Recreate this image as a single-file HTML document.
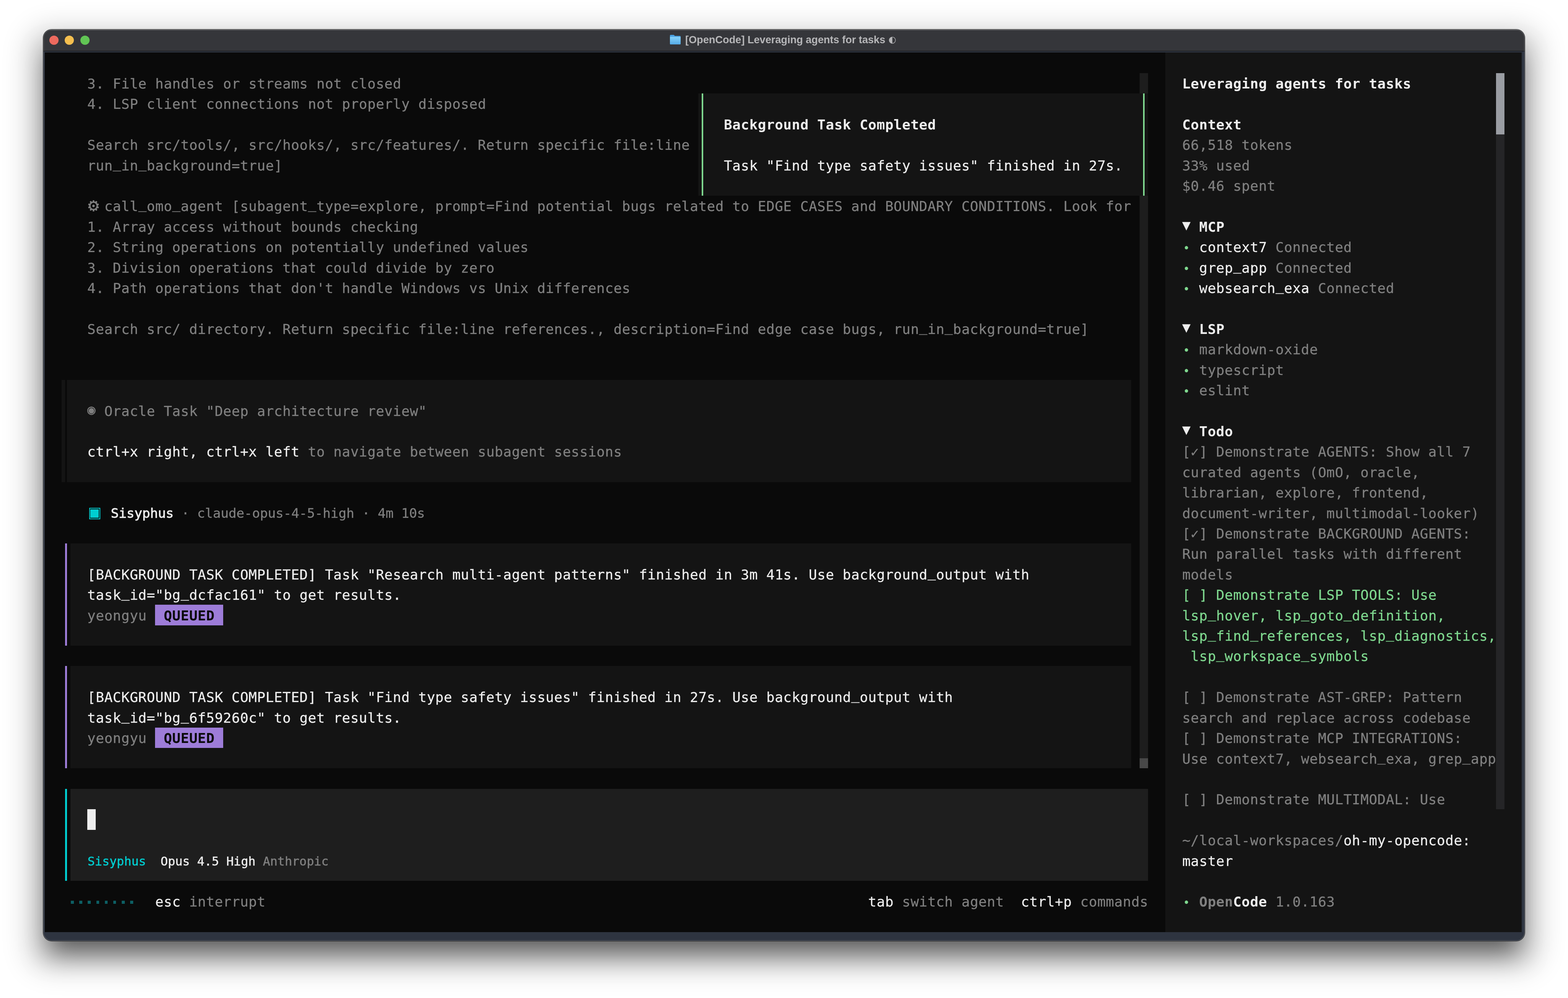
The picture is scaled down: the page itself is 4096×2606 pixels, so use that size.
<!DOCTYPE html>
<html lang="en"><head><meta charset="utf-8"><title>[OpenCode] Leveraging agents for tasks</title>
<style>
html,body{margin:0;padding:0;}
body{width:4096px;height:2606px;background:#fff;position:relative;overflow:hidden;
 font-family:"DejaVu Sans Mono","Liberation Mono",monospace;}
#win{position:absolute;border-radius:22px;background:#2e3440;
 box-shadow:0 0 0 1px rgba(0,0,0,.8),0 45px 67px -14px rgba(0,0,0,.59),0 35px 70px 40px rgba(0,0,0,.17);}
#clip{position:absolute;border-radius:22px;overflow:hidden;}
#page{position:absolute;width:4096px;height:2606px;will-change:transform;}
#ring{position:absolute;border-radius:22px;box-shadow:inset 0 0 0 1.5px rgba(255,255,255,.2);pointer-events:none;}
.r{position:absolute;}
.t{position:absolute;white-space:pre;font-size:36.0px;line-height:53.41px;height:53.41px;
 font-kerning:none;font-variant-ligatures:none;letter-spacing:0.497px;-webkit-text-stroke:0.3px;}
.u{position:relative;top:-6px;}
.up{position:relative;top:-3.3px;}
.tri{position:relative;top:-4.5px;}
.bl{display:inline-block;width:22.171px;text-align:center;letter-spacing:0;font-size:29px;position:relative;top:-1px;}
.m{color:#808080;}
.w{color:#eeeeee;}
.k{color:#0a0a0a;}
.c{color:#00ced1;}
.gr{color:#7fd88f;}
.b{font-weight:bold;-webkit-text-stroke:0;}
.gear{font-family:"DejaVu Sans",sans-serif;font-size:38px;font-weight:bold;letter-spacing:0;-webkit-text-stroke:0.8px;position:relative;top:0;left:-1px;}
.sq{width:29.2px;height:29.6px;box-sizing:border-box;border:2.6px solid #00ced1;}
.sq i{position:absolute;left:1.7px;top:1.7px;right:1.7px;bottom:1.7px;background:#00ced1;}
#hdr{font-size:34.5px;letter-spacing:-0.27px;}
#agent{font-size:31.7px;letter-spacing:0;-webkit-text-stroke:0.55px;margin-top:1.8px;}
.sb{-webkit-text-stroke:0.85px;}
#title{position:absolute;left:1749px;top:76px;height:56px;line-height:56px;white-space:pre;
 font-family:"Liberation Sans",sans-serif;font-weight:bold;font-size:27.3px;letter-spacing:-.1px;color:#b6b6b8;}
#folder{position:absolute;left:0;top:13.5px;}
#ttext{position:absolute;left:41px;top:0;}
#tmoon{position:absolute;left:572px;top:-1px;font-family:"DejaVu Sans",sans-serif;font-weight:normal;font-size:23px;letter-spacing:0;}
</style></head><body>
<div id="win" style="left:112.6px;top:76.9px;width:3870.4px;height:2380.1px;">
</div>
<div id="clip" style="left:112.6px;top:76.9px;width:3870.4px;height:2380.1px;">
<div id="page" style="left:-112.6px;top:-76.9px;">
<div class="r" style="left:112.60px;top:76.90px;width:3870.40px;height:56.00px;background:#35363a;box-shadow:inset 0 1.5px 0 rgba(255,255,255,.22);"></div>
<div class="r" style="left:129.00px;top:93.00px;width:24.00px;height:24.00px;background:#ed6a5e;border-radius:50%;"></div>
<div class="r" style="left:169.00px;top:93.00px;width:24.00px;height:24.00px;background:#f5bf4f;border-radius:50%;"></div>
<div class="r" style="left:209.50px;top:93.00px;width:24.00px;height:24.00px;background:#61c554;border-radius:50%;"></div>
<div class="r" style="left:112.60px;top:132.70px;width:3870.40px;height:1.30px;background:#0c0c0e;"></div>
<div id="title"><svg id="folder" viewBox="0 0 30 27" width="30" height="27"><defs><linearGradient id="fg" x1="0" y1="0" x2="0" y2="1"><stop offset="0" stop-color="#86d3fa"/><stop offset="1" stop-color="#55aae6"/></linearGradient></defs><path d="M1 3C1 1.900 1.900 1 3 1h7.300c.7 0 1.300.3 1.800.8l1.700 1.900H27c1.100 0 2 .9 2 2V24c0 1.100-.9 2-2 2H3c-1.100 0-2-.9-2-2z" fill="#4ba2e2"/><path d="M1 7.200c0-.5.400-.9.900-.9h26.200c.5 0 .9.400.9.900V24c0 1.100-.9 2-2 2H3c-1.100 0-2-.9-2-2z" fill="url(#fg)"/></svg><span id="ttext">[OpenCode] Leveraging agents for tasks</span><span id="tmoon">◐</span></div>
<div class="r" style="left:117.00px;top:137.10px;width:3857.75px;height:2296.63px;background:#0a0a0a;"></div>
<div class="r" style="left:3043.57px;top:137.10px;width:931.18px;height:2296.63px;background:#141414;"></div>
<div class="t" style="left:228.10px;top:192.01px;"><span class="m">3. File handles or streams not closed</span></div>
<div class="t" style="left:228.10px;top:245.42px;"><span class="m">4. LSP client connections not properly disposed</span></div>
<div class="t" style="left:228.10px;top:352.24px;"><span class="m">Search src/tools/, src/hooks/, src/features/. Return specific file:line</span></div>
<div class="t" style="left:228.10px;top:405.65px;"><span class="m">run<span class="u">_</span>in<span class="u">_</span>background=true]</span></div>
<div class="t g" style="left:228.35px;top:512.47px;"><span class="m gear">⚙</span></div>
<div class="t" style="left:272.45px;top:512.47px;"><span class="m">call<span class="u">_</span>omo<span class="u">_</span>agent [subagent<span class="u">_</span>type=explore, prompt=Find potential bugs related to EDGE CASES and BOUNDARY CONDITIONS. Look for</span></div>
<div class="t" style="left:228.10px;top:565.88px;"><span class="m">1. Array access without bounds checking</span></div>
<div class="t" style="left:228.10px;top:619.29px;"><span class="m">2. String operations on potentially undefined values</span></div>
<div class="t" style="left:228.10px;top:672.70px;"><span class="m">3. Division operations that could divide by zero</span></div>
<div class="t" style="left:228.10px;top:726.11px;"><span class="m">4. Path operations that don't handle Windows vs Unix differences</span></div>
<div class="t" style="left:228.10px;top:832.93px;"><span class="m">Search src/ directory. Return specific file:line references., description=Find edge case bugs, run<span class="u">_</span>in<span class="u">_</span>background=true]</span></div>
<div class="r" style="left:2977.06px;top:190.51px;width:22.17px;height:1815.94px;background:#1d1d1d;"></div>
<div class="r" style="left:2977.06px;top:1979.74px;width:22.17px;height:26.70px;background:#484848;"></div>
<div class="r" style="left:1824.17px;top:243.92px;width:1175.06px;height:267.05px;background:#141414;"></div>
<div class="r" style="left:1833.05px;top:243.92px;width:4.40px;height:267.05px;background:#7fd88f;"></div>
<div class="r" style="left:2985.94px;top:243.92px;width:4.40px;height:267.05px;background:#7fd88f;"></div>
<div class="t" style="left:1890.93px;top:298.83px;"><span class="w b">Background Task Completed</span></div>
<div class="t" style="left:1890.93px;top:405.65px;"><span class="w">Task "Find type safety issues" finished in 27s.</span></div>
<div class="r" style="left:161.34px;top:991.66px;width:2793.55px;height:267.05px;background:#141414;"></div>
<div class="r" style="left:170.23px;top:991.66px;width:4.40px;height:267.05px;background:#0a0a0a;"></div>
<div class="t" style="left:228.10px;top:1046.57px;"><span class="m"><span class="up">◉</span> Oracle Task "Deep architecture review"</span></div>
<div class="t" style="left:228.10px;top:1153.39px;"><span class="w">ctrl+x right, ctrl+x left</span><span class="m"> to navigate between subagent sessions</span></div>
<div class="r sq" style="left:232.7px;top:1326.1px;"><i></i></div>
<div class="t" id="hdr" style="left:289.6px;top:1313.62px;"><span class="w sb">Sisyphus</span><span class="m"> · claude-opus-4-5-high · 4m 10s</span></div>
<div class="r" style="left:183.51px;top:1418.94px;width:2771.38px;height:267.05px;background:#141414;"></div>
<div class="r" style="left:170.23px;top:1418.94px;width:4.40px;height:267.05px;background:#9d7cd8;"></div>
<div class="t" style="left:228.10px;top:1473.85px;"><span class="w">[BACKGROUND TASK COMPLETED] Task "Research multi-agent patterns" finished in 3m 41s. Use background<span class="u">_</span>output with</span></div>
<div class="t" style="left:228.10px;top:1527.26px;"><span class="w">task<span class="u">_</span>id="bg<span class="u">_</span>dcfac161" to get results.</span></div>
<div class="t" style="left:228.10px;top:1580.67px;"><span class="m">yeongyu</span></div>
<div class="r" style="left:405.22px;top:1579.17px;width:177.37px;height:53.41px;background:#9d7cd8;"></div>
<div class="t" style="left:405.47px;top:1580.67px;"><span class="k b"> QUEUED </span></div>
<div class="r" style="left:183.51px;top:1739.40px;width:2771.38px;height:267.05px;background:#141414;"></div>
<div class="r" style="left:170.23px;top:1739.40px;width:4.40px;height:267.05px;background:#9d7cd8;"></div>
<div class="t" style="left:228.10px;top:1794.31px;"><span class="w">[BACKGROUND TASK COMPLETED] Task "Find type safety issues" finished in 27s. Use background<span class="u">_</span>output with</span></div>
<div class="t" style="left:228.10px;top:1847.72px;"><span class="w">task<span class="u">_</span>id="bg<span class="u">_</span>6f59260c" to get results.</span></div>
<div class="t" style="left:228.10px;top:1901.13px;"><span class="m">yeongyu</span></div>
<div class="r" style="left:405.22px;top:1899.63px;width:177.37px;height:53.41px;background:#9d7cd8;"></div>
<div class="t" style="left:405.47px;top:1901.13px;"><span class="k b"> QUEUED </span></div>
<div class="r" style="left:183.51px;top:2059.86px;width:2815.72px;height:240.34px;background:#1e1e1e;"></div>
<div class="r" style="left:170.23px;top:2059.86px;width:4.40px;height:240.34px;background:#00ced1;"></div>
<div class="r" style="left:227.85px;top:2113.27px;width:22.17px;height:53.41px;background:#eeeeee;"></div>
<div class="t" id="agent" style="left:228.8px;top:2221.59px;"><span class="c">Sisyphus</span><span class="w">  Opus 4.5 High</span><span class="m"> Anthropic</span></div>
<div class="r" style="left:185.11px;top:2352.30px;width:7.40px;height:7.40px;background:#0d5f64;"></div>
<div class="r" style="left:207.28px;top:2352.30px;width:7.40px;height:7.40px;background:#0d5f64;"></div>
<div class="r" style="left:229.45px;top:2352.30px;width:7.40px;height:7.40px;background:#0d5f64;"></div>
<div class="r" style="left:251.63px;top:2352.30px;width:7.40px;height:7.40px;background:#0d5f64;"></div>
<div class="r" style="left:273.80px;top:2352.30px;width:7.40px;height:7.40px;background:#0d5f64;"></div>
<div class="r" style="left:295.97px;top:2352.30px;width:7.40px;height:7.40px;background:#0d5f64;"></div>
<div class="r" style="left:318.14px;top:2352.30px;width:7.40px;height:7.40px;background:#0d5f64;"></div>
<div class="r" style="left:340.31px;top:2352.30px;width:7.40px;height:7.40px;background:#0d5f64;"></div>
<div class="t" style="left:405.47px;top:2328.41px;"><span class="w">esc</span><span class="m"> interrupt</span></div>
<div class="t" style="left:2267.84px;top:2328.41px;"><span class="w">tab</span><span class="m"> switch agent  </span><span class="w">ctrl+p</span><span class="m"> commands</span></div>
<div class="t" style="left:3088.16px;top:192.01px;"><span class="w b">Leveraging agents for tasks</span></div>
<div class="t" style="left:3088.16px;top:298.83px;"><span class="w b">Context</span></div>
<div class="t" style="left:3088.16px;top:352.24px;"><span class="m">66,518 tokens</span></div>
<div class="t" style="left:3088.16px;top:405.65px;"><span class="m">33% used</span></div>
<div class="t" style="left:3088.16px;top:459.06px;"><span class="m">$0.46 spent</span></div>
<div class="t" style="left:3088.16px;top:565.88px;"><span class="w"><span class="tri">▼</span></span><span class="w b"> MCP</span></div>
<div class="t" style="left:3088.16px;top:619.29px;"><span class="gr"><span class="bl">•</span></span><span class="w"> context7</span><span class="m"> Connected</span></div>
<div class="t" style="left:3088.16px;top:672.70px;"><span class="gr"><span class="bl">•</span></span><span class="w"> grep<span class="u">_</span>app</span><span class="m"> Connected</span></div>
<div class="t" style="left:3088.16px;top:726.11px;"><span class="gr"><span class="bl">•</span></span><span class="w"> websearch<span class="u">_</span>exa</span><span class="m"> Connected</span></div>
<div class="t" style="left:3088.16px;top:832.93px;"><span class="w"><span class="tri">▼</span></span><span class="w b"> LSP</span></div>
<div class="t" style="left:3088.16px;top:886.34px;"><span class="gr"><span class="bl">•</span></span><span class="m"> markdown-oxide</span></div>
<div class="t" style="left:3088.16px;top:939.75px;"><span class="gr"><span class="bl">•</span></span><span class="m"> typescript</span></div>
<div class="t" style="left:3088.16px;top:993.16px;"><span class="gr"><span class="bl">•</span></span><span class="m"> eslint</span></div>
<div class="t" style="left:3088.16px;top:1099.98px;"><span class="w"><span class="tri">▼</span></span><span class="w b"> Todo</span></div>
<div class="t" style="left:3088.16px;top:1153.39px;"><span class="m">[✓] Demonstrate AGENTS: Show all 7</span></div>
<div class="t" style="left:3088.16px;top:1206.80px;"><span class="m">curated agents (OmO, oracle,</span></div>
<div class="t" style="left:3088.16px;top:1260.21px;"><span class="m">librarian, explore, frontend,</span></div>
<div class="t" style="left:3088.16px;top:1313.62px;"><span class="m">document-writer, multimodal-looker)</span></div>
<div class="t" style="left:3088.16px;top:1367.03px;"><span class="m">[✓] Demonstrate BACKGROUND AGENTS:</span></div>
<div class="t" style="left:3088.16px;top:1420.44px;"><span class="m">Run parallel tasks with different</span></div>
<div class="t" style="left:3088.16px;top:1473.85px;"><span class="m">models</span></div>
<div class="t" style="left:3088.16px;top:1527.26px;"><span class="gr">[ ] Demonstrate LSP TOOLS: Use</span></div>
<div class="t" style="left:3088.16px;top:1580.67px;"><span class="gr">lsp<span class="u">_</span>hover, lsp<span class="u">_</span>goto<span class="u">_</span>definition,</span></div>
<div class="t" style="left:3088.16px;top:1634.08px;"><span class="gr">lsp<span class="u">_</span>find<span class="u">_</span>references, lsp<span class="u">_</span>diagnostics,</span></div>
<div class="t" style="left:3088.16px;top:1687.49px;"><span class="gr"> lsp<span class="u">_</span>workspace<span class="u">_</span>symbols</span></div>
<div class="t" style="left:3088.16px;top:1794.31px;"><span class="m">[ ] Demonstrate AST-GREP: Pattern</span></div>
<div class="t" style="left:3088.16px;top:1847.72px;"><span class="m">search and replace across codebase</span></div>
<div class="t" style="left:3088.16px;top:1901.13px;"><span class="m">[ ] Demonstrate MCP INTEGRATIONS:</span></div>
<div class="t" style="left:3088.16px;top:1954.54px;"><span class="m">Use context7, websearch<span class="u">_</span>exa, grep<span class="u">_</span>app</span></div>
<div class="t" style="left:3088.16px;top:2061.36px;"><span class="m">[ ] Demonstrate MULTIMODAL: Use</span></div>
<div class="t" style="left:3088.16px;top:2168.18px;"><span class="m">~/local-workspaces/</span><span class="w">oh-my-opencode:</span></div>
<div class="t" style="left:3088.16px;top:2221.59px;"><span class="w">master</span></div>
<div class="t" style="left:3088.16px;top:2328.41px;"><span class="gr"><span class="bl">•</span></span><span class="m b"> Open</span><span class="w b">Code</span><span class="m"> 1.0.163</span></div>
<div class="r" style="left:3908.24px;top:190.51px;width:22.17px;height:1922.76px;background:#252527;"></div>
<div class="r" style="left:3908.24px;top:190.51px;width:22.17px;height:160.23px;background:#9a9da3;"></div>
</div></div>
<div id="ring" style="left:112.6px;top:76.9px;width:3870.4px;height:2380.1px;"></div>
</body></html>
